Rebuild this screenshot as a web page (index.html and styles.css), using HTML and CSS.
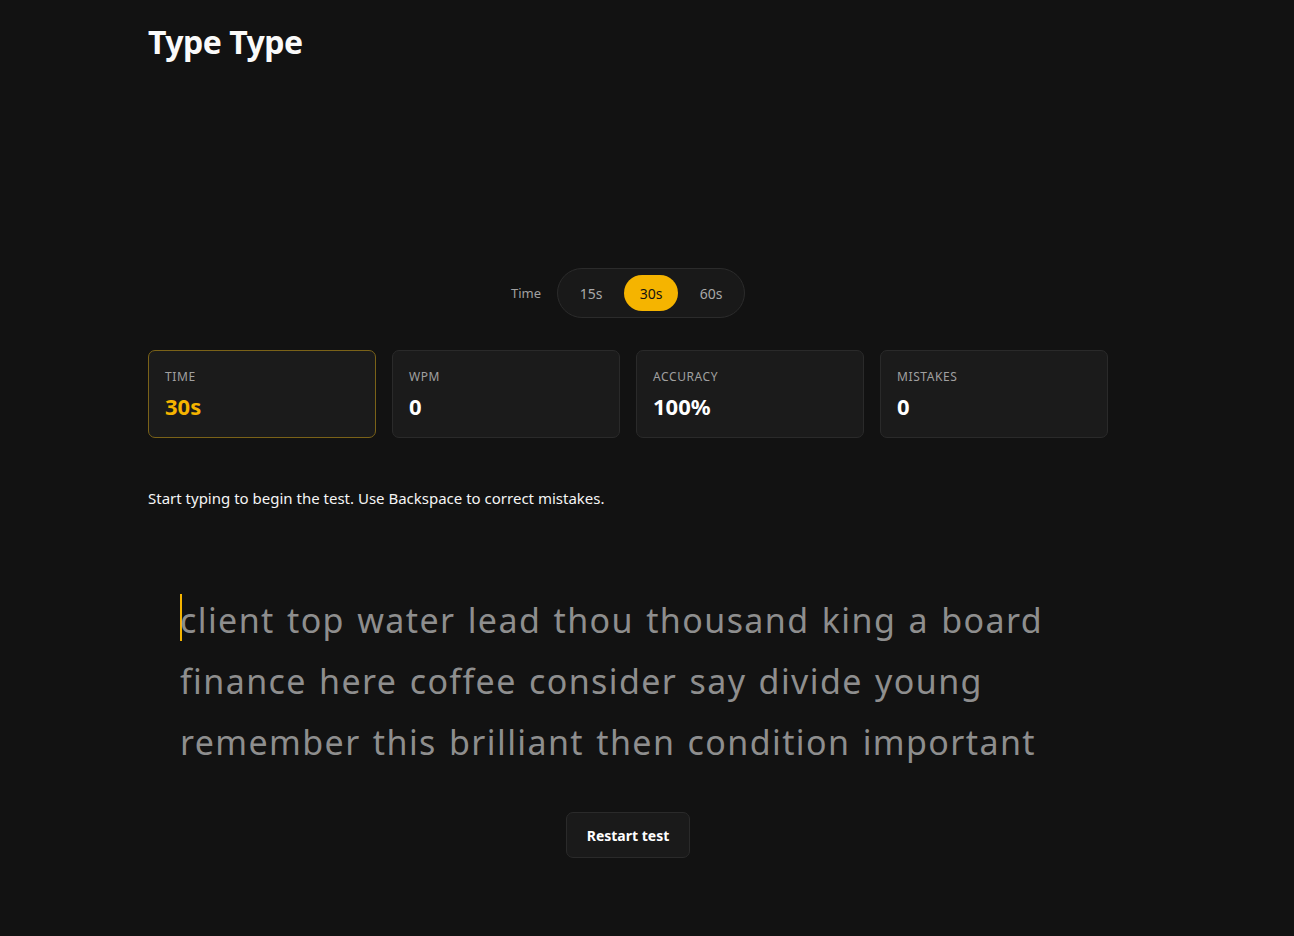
FILE: index.html
```html
<!DOCTYPE html>
<html lang="en">
  <head>
    <meta charset="UTF-8" />
    <meta name="viewport" content="width=device-width, initial-scale=1.0" />
    <title>Type Type</title>
    <link rel="stylesheet" href="styles.css">
  </head>
  <body>
    <div class="app">
      <header>
        <h1>Type Type</h1>
      </header>
      <main>
        <div class="duration">
          <span class="duration-label">Time</span>
          <div class="toggle">
            <button class="opt">15s</button>
            <button class="opt active">30s</button>
            <button class="opt">60s</button>
          </div>
        </div>

        <section class="stats">
          <div class="stat highlight">
            <div class="stat-label">Time</div>
            <div class="stat-value">30s</div>
          </div>
          <div class="stat">
            <div class="stat-label">WPM</div>
            <div class="stat-value">0</div>
          </div>
          <div class="stat">
            <div class="stat-label">Accuracy</div>
            <div class="stat-value">100%</div>
          </div>
          <div class="stat">
            <div class="stat-label">Mistakes</div>
            <div class="stat-value">0</div>
          </div>
        </section>

        <p class="hint">Start typing to begin the test. Use Backspace to correct mistakes.</p>

        <div class="words">
          <span class="caret"></span>client top water lead thou thousand king a board finance here coffee consider say divide young remember this brilliant then condition important
        </div>

        <div class="actions">
          <button class="restart">Restart test</button>
        </div>
      </main>
    </div>
  </body>
</html>
```
FILE: styles.css
```css
* {
  padding: 0;
  margin: 0;
  box-sizing: border-box;
}

body {
  background: #121212;
  color: #f2f2f2;
  font-family: "Noto Sans", "Open Sans", sans-serif;
  padding-right: 38px;
}

.app {
  width: 960px;
  margin: 0 auto;
}

header {
  padding-top: 20px;
  height: 268px;
}

h1 {
  font-size: 32px;
  font-weight: 700;
  line-height: 44px;
  color: #fafafa;
  letter-spacing: -0.5px;
}

.duration {
  display: flex;
  justify-content: center;
  align-items: center;
  gap: 16px;
}

.duration-label {
  font-size: 13px;
  color: #a0a0a0;
}

.toggle {
  display: flex;
  align-items: center;
  height: 50px;
  padding: 0 4px;
  background: #191919;
  border: 1px solid #2b2b2b;
  border-radius: 25px;
}

.opt {
  background: none;
  border: none;
  color: #a8a8a8;
  font-family: inherit;
  font-size: 14px;
  height: 36px;
  width: 58px;
  border-radius: 18px;
}

.opt.active {
  background: #f5b400;
  color: #121212;
  width: 54px;
  margin: 0 4px;
}

.stats {
  display: grid;
  grid-template-columns: repeat(4, 1fr);
  gap: 16px;
  margin-top: 32px;
}

.stat {
  height: 88px;
  padding: 18px 16px;
  background: #1b1b1b;
  border: 1px solid #2a2a2a;
  border-radius: 7px;
}

.stat.highlight {
  border-color: #7a6218;
}

.stat-label {
  font-size: 12px;
  letter-spacing: 0.6px;
  text-transform: uppercase;
  color: #a0a0a0;
  line-height: 16px;
}

.stat-value {
  margin-top: 6px;
  font-size: 22px;
  font-weight: 700;
  line-height: 30px;
  color: #ffffff;
}

.highlight .stat-value {
  color: #f5b400;
}

.hint {
  margin-top: 50px;
  font-size: 15px;
  line-height: 20px;
  color: #f5f5f5;
}

.words {
  margin-top: 82px;
  padding: 0 32px;
  font-size: 34px;
  line-height: 61px;
  letter-spacing: 1.4px;
  word-spacing: 2px;
  color: #8e8e8e;
}

.caret {
  display: inline-block;
  width: 2px;
  height: 47px;
  margin-right: -2px;
  vertical-align: -8px;
  background: #f5b400;
}

.actions {
  display: flex;
  justify-content: center;
  margin-top: 39px;
}

.restart {
  width: 124px;
  height: 46px;
  background: #1a1a1a;
  border: 1px solid #2a2a2a;
  border-radius: 7px;
  color: #ffffff;
  font-family: inherit;
  font-size: 14px;
  font-weight: 700;
}
```
